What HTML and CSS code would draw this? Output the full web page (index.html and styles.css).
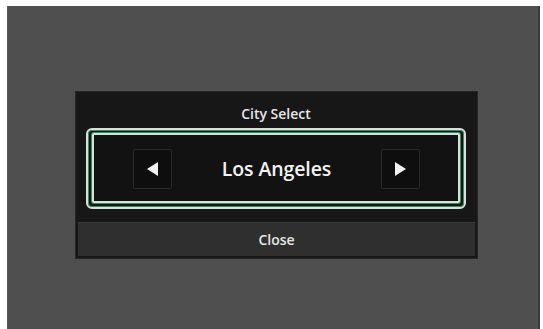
FILE: index.html
```html
<!DOCTYPE html>
<html lang="en">
<head>
    <meta charset="UTF-8">
    <meta name="viewport" content="width=device-width, initial-scale=1.0">
    <title>City Select</title>
    <link rel="stylesheet" href="styles.css">
</head>
<body>
<div class="screen">
    <div class="dialog">
        <div class="dialog-title">City Select</div>

        <div class="frame">
            <div class="frame-inner">
                <button class="arrow-btn" aria-label="Previous city">
                    <svg width="12" height="14" viewBox="0 0 12 14"><polygon points="11,0 11,14 0,7" fill="#f2f2f2"/></svg>
                </button>
                <div class="city-name">Los Angeles</div>
                <button class="arrow-btn" aria-label="Next city">
                    <svg width="12" height="14" viewBox="0 0 12 14"><polygon points="1,0 1,14 12,7" fill="#f2f2f2"/></svg>
                </button>
            </div>
        </div>

        <button class="close-btn">Close</button>
    </div>
</div>
</body>
</html>
```

FILE: styles.css
```css
* {
    margin: 0;
    padding: 0;
    box-sizing: border-box;
}

body {
    font-family: 'Open Sans', 'Liberation Sans', sans-serif;
    background: #ffffff;
    width: 543px;
    height: 329px;
    overflow: hidden;
}

.screen {
    margin: 6px 0 0 7px;
    width: 533px;
    height: 323px;
    background: #4f4f4f;
    border-left: 1px solid #5a5a5a;
    border-right: 2px solid #3a3a3a;
    padding: 86px 0 0 68px;
}

.dialog {
    width: 401px;
    height: 166px;
    background: #171717;
    display: flex;
    flex-direction: column;
    padding: 0 11px 2px 10px;
    box-shadow: 0 0 0 1px #262626;
}

.dialog-title {
    height: 36px;
    color: #e6e6e6;
    font-size: 14px;
    font-weight: 600;
    text-align: center;
    line-height: 20px;
    padding-top: 12px;
}

.frame {
    height: 81px;
    border: 2px solid #d2e4da;
    border-radius: 6px;
    padding: 3px 4px 4px 4px;
    box-shadow: inset 0 0 0 1px #3e8a66;
    background: #141414;
}

.frame-inner {
    height: 100%;
    border: 2px solid #d2e4da;
    border-radius: 2px;
    box-shadow: 0 0 0 1px #3e8a66;
    display: flex;
    align-items: center;
    justify-content: space-between;
    padding: 0 38px 0 39px;
    background: #121212;
}

.arrow-btn {
    width: 39px;
    height: 40px;
    background: #0e0e0e;
    border: 1px solid #2a2a2a;
    border-radius: 2px;
    display: flex;
    align-items: center;
    justify-content: center;
    margin-top: 1px;
}

.city-name {
    color: #f2f2f2;
    font-size: 19.5px;
    font-weight: 600;
    letter-spacing: -0.1px;
}

.close-btn {
    margin: 13px -9px 0 -8px;
    height: 34px;
    background: #2f2f2f;
    border: none;
    border-top: 1px solid #3a3a3a;
    color: #e6e6e6;
    font-family: inherit;
    font-size: 14px;
    font-weight: 600;
}
```
